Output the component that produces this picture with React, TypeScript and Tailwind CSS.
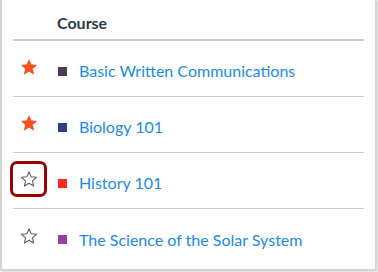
const courses = [
  { name: "Basic Written Communications", color: "bg-[#4b3d4f]", fav: true },
  { name: "Biology 101", color: "bg-[#2c3f87]", fav: true },
  { name: "History 101", color: "bg-[#fc2a1b]", fav: false, focus: true },
  { name: "The Science of the Solar System", color: "bg-[#983f9d]", fav: false },
];

const Star = ({ filled }: { filled: boolean }) => (
  <svg width="18" height="18" viewBox="0 0 24 24">
    <path
      d="M12 2.5l2.9 6.6 7.1.6-5.4 4.7 1.6 7-6.2-3.7-6.2 3.7 1.6-7L2 9.7l7.1-.6z"
      fill={filled ? "#f4511e" : "none"}
      stroke={filled ? "#f4511e" : "#555e66"}
      strokeWidth={filled ? 1 : 1.4}
      strokeLinejoin="round"
    />
  </svg>
);

export default function App() {
  return (
    <div className="w-[378px] h-[272px] bg-white font-['Lato',sans-serif]">
      <div className="w-[377px] h-[271px] border-l-2 border-r-2 border-b-2 border-[#d4d4d4] px-[11px] shadow-[1px_1px_2px_rgba(0,0,0,0.15)]">
        <div className="h-[41px] border-b-2 border-[#c7cdd1] pl-[44px] pt-[11px] text-[16px] font-bold text-[#2d3b45]">
          Course
        </div>
        {courses.map((c, i) => (
          <div
            key={c.name}
            className={`h-[56px] flex items-center ${i < courses.length - 1 ? "border-b border-[#c7cdd1]" : ""}`}
          >
            <div className="w-[45px] flex items-center mb-[3px]">
              <div
                className={`w-[37px] h-[36px] ml-[-3px] flex items-center justify-center ${
                  c.focus ? "rounded-[7px] border-[3px] border-[#990000]" : ""
                }`}
              >
                <Star filled={c.fav} />
              </div>
            </div>
            <span className={`w-[9px] h-[9px] mt-[5px] ${c.color}`} />
            <span className="ml-[12px] mt-[5px] text-[16px] text-[#1a8be6]">{c.name}</span>
          </div>
        ))}
      </div>
    </div>
  );
}
